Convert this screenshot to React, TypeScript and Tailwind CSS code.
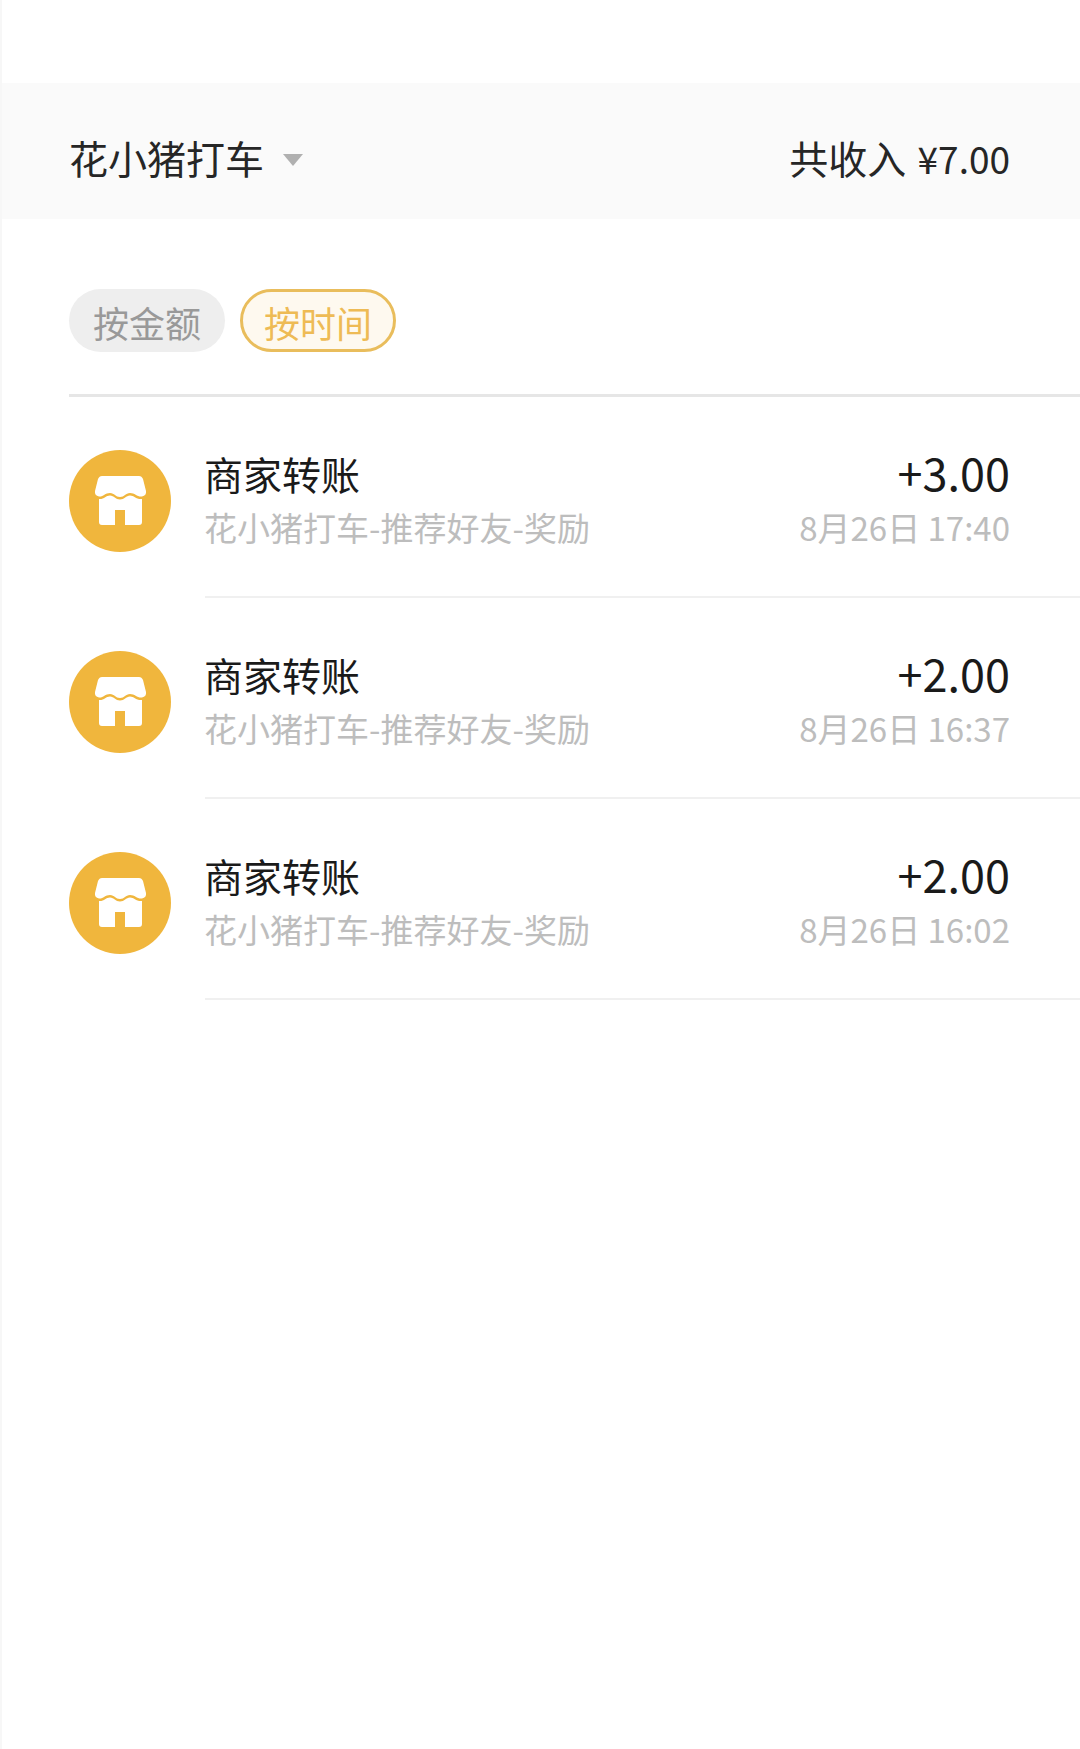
const cjk = "font-['Noto_Sans_CJK_SC','Noto_Sans',sans-serif]";

const records = [
  { amount: "+3.00", time: "8月26日 17:40" },
  { amount: "+2.00", time: "8月26日 16:37" },
  { amount: "+2.00", time: "8月26日 16:02" },
];

function ShopIcon() {
  return (
    <div className="mt-[6px] h-[102px] w-[102px] shrink-0 rounded-full bg-[#f0b63d]">
      <svg viewBox="0 0 102 102" className="h-full w-full">
        <path
          fill="#fff"
          d="M33 26H70C72 26 73 27 74 29L77 41C77.500 44 76 46 73 46.500C68 47 66 43 61 43C56.500 43 55.500 47 51 47C46.500 47 45.500 43 41 43C36 43 34 47 30 46.500C27 46 25.500 44 26 41L29 29C30 27 31 26 33 26Z"
        />
        <path
          fill="#fff"
          d="M30 49C35 49.500 37 45.500 41 45.500C45 45.500 46.500 49.500 51 49.500C55.500 49.500 57 45.500 61 45.500C65 45.500 67 49.500 73 49V72C73 74 72 75 70 75H56V60H46V75H33C31 75 30 74 30 72Z"
        />
      </svg>
    </div>
  );
}

function RecordRow({ amount, time }: { amount: string; time: string }) {
  return (
    <div className="flex h-[201px] items-center pl-[67px]">
      <ShopIcon />
      <div className="ml-[34px] flex h-full flex-1 border-b-2 border-[#f0f0f0] pr-[70px]">
        <div className="flex-1 pt-[49px]">
          <div className="-ml-px text-[39px] leading-[54px] text-[#1a1a1a]">商家转账</div>
          <div className="-ml-px pt-[2px] text-[33px] leading-[50px] text-[#bdbdbd]">花小猪打车-推荐好友-奖励</div>
        </div>
        <div className="pt-[46px] text-right">
          <div className="text-[45px] leading-[58px] text-[#1a1a1a]">{amount}</div>
          <div className="pt-[1px] text-[33px] leading-[50px] text-[#bdbdbd]">{time}</div>
        </div>
      </div>
    </div>
  );
}

export default function App() {
  return (
    <div className={`min-h-[1749px] border-l-2 border-[#f7f7f7] bg-white pt-[83px] ${cjk}`}>
      {/* Top Bar */}
      <div className="flex h-[136px] items-center justify-between bg-[#fafafa] pl-[67px] pr-[70px] pt-[12px]">
        <div className="flex items-center">
          <span className="text-[39px] leading-none text-[#262626]">花小猪打车</span>
          <span className="ml-[19px] mt-[6px] h-0 w-0 border-x-[10px] border-t-[12px] border-x-transparent border-t-[#b0b0b0]" />
        </div>
        <div className="text-[37px] leading-none text-[#262626]">
          <span className="mr-[3px] text-[39px]">共收入</span> ¥7.00
        </div>
      </div>

      {/* Sort Tabs */}
      <div className="ml-[67px] flex gap-[15px] border-b-[3px] border-[#e6e6e6] pb-[42px] pt-[70px]">
        <div className="flex h-[63px] w-[156px] items-center justify-center rounded-full bg-[#eeeeee] pt-[2px] text-[36px] text-[#999999]">
          按金额
        </div>
        <div className="flex h-[63px] w-[156px] items-center justify-center rounded-full border-[3px] border-[#e9bd5c] bg-[#fef9ef] pt-[2px] text-[36px] text-[#eebb55]">
          按时间
        </div>
      </div>

      {/* Records */}
      {records.map((record, index) => (
        <RecordRow key={index} amount={record.amount} time={record.time} />
      ))}
    </div>
  );
}
